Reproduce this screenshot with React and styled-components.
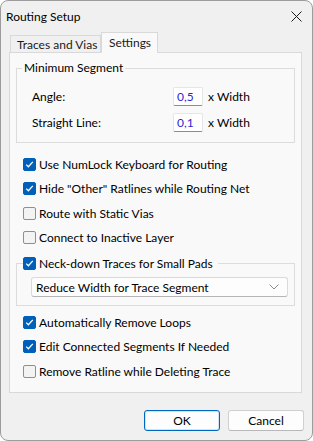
import React from 'react';
import styled, { createGlobalStyle } from 'styled-components';

const GlobalStyle = createGlobalStyle`
  html, body {
    margin: 0;
    padding: 0;
    background: #ffffff;
  }
  body {
    font-family: "Segoe UI", Lato, "Noto Sans", sans-serif;
    font-size: 12px;
    color: #000;
  }
`;

const options = [
  { label: 'Use NumLock Keyboard for Routing', checked: true },
  { label: 'Hide "Other" Ratlines while Routing Net', checked: true },
  { label: 'Route with Static Vias', checked: false },
  { label: 'Connect to Inactive Layer', checked: false },
];

const moreOptions = [
  { label: 'Automatically Remove Loops', checked: true },
  { label: 'Edit Connected Segments If Needed', checked: true },
  { label: 'Remove Ratline while Deleting Trace', checked: false },
];

const CheckBox = ({ checked }) => (
  <Box checked={checked}>
    {checked && (
      <svg width="9" height="9" viewBox="0 0 9 9">
        <path d="M1.2 4.6 L3.4 6.8 L7.8 1.9" fill="none" stroke="#fff" strokeWidth="1.3" />
      </svg>
    )}
  </Box>
);

const CheckRow = ({ label, checked }) => (
  <Row>
    <CheckBox checked={checked} />
    <RowText>{label}</RowText>
  </Row>
);

const App = () => {
  return (
    <>
      <GlobalStyle />
      <Window>
        <TitleBar>
          <Title>Routing Setup</Title>
          <svg width="11" height="11" viewBox="0 0 11 11">
            <path d="M0.5 0.5 L10.5 10.5 M10.5 0.5 L0.5 10.5" stroke="#1a1a1a" strokeWidth="1" />
          </svg>
        </TitleBar>
        <Body>
          <TabStrip>
            <Tab width={91}>Traces and Vias</Tab>
            <Tab width={57} active>Settings</Tab>
          </TabStrip>
          <Panel>
            <Group>
              <Legend>Minimum Segment</Legend>
              <FieldRow>
                <FieldLabel>Angle:</FieldLabel>
                <NumberBox>0,5</NumberBox>
                <Unit>x Width</Unit>
              </FieldRow>
              <FieldRow>
                <FieldLabel>Straight Line:</FieldLabel>
                <NumberBox>0,1</NumberBox>
                <Unit>x Width</Unit>
              </FieldRow>
            </Group>

            <CheckList>
              {options.map((o) => (
                <CheckRow key={o.label} {...o} />
              ))}
            </CheckList>

            <NeckGroup>
              <CheckLegend>
                <CheckBox checked />
                <RowText>Neck-down Traces for Small Pads</RowText>
              </CheckLegend>
              <Select>
                <span>Reduce Width for Trace Segment</span>
                <svg width="10" height="6" viewBox="0 0 10 6">
                  <path d="M0.5 0.5 L5 5 L9.5 0.5" fill="none" stroke="#8a8a8a" strokeWidth="1" />
                </svg>
              </Select>
            </NeckGroup>

            <CheckList after>
              {moreOptions.map((o) => (
                <CheckRow key={o.label} {...o} />
              ))}
            </CheckList>
          </Panel>
          <Buttons>
            <Button primary>OK</Button>
            <Button>Cancel</Button>
          </Buttons>
        </Body>
      </Window>
    </>
  );
};

const Window = styled.div`
  width: 313px;
  height: 441px;
  box-sizing: border-box;
  border: 1px solid #9c9c9c;
  border-radius: 8px;
  background: #f0f0f0;
  overflow: hidden;
  display: flex;
  flex-direction: column;
`;

const TitleBar = styled.div`
  height: 31px;
  display: flex;
  align-items: center;
  justify-content: space-between;
  padding: 0 10px 1px 5px;
  box-sizing: border-box;
`;

const Title = styled.span`
  font-size: 12px;
  color: #000;
`;

const Body = styled.div`
  padding: 0 8px;
  display: flex;
  flex-direction: column;
`;

const TabStrip = styled.div`
  height: 20px;
  display: flex;
  align-items: flex-end;
  padding-left: 1px;
  position: relative;
  z-index: 1;
`;

const Tab = styled.div`
  box-sizing: border-box;
  width: ${(p) => p.width}px;
  height: ${(p) => (p.active ? '21px' : '17px')};
  margin-bottom: ${(p) => (p.active ? '-1px' : '0')};
  padding: ${(p) => (p.active ? '2px 0 0 7px' : '0 0 0 6px')};
  border: 1px solid #d9d9d9;
  border-bottom: none;
  background: ${(p) => (p.active ? '#f9f9f9' : '#f0f0f0')};
  display: flex;
  align-items: ${(p) => (p.active ? 'flex-start' : 'center')};
  color: #1a1a1a;
  white-space: nowrap;
`;

const Panel = styled.div`
  box-sizing: border-box;
  height: 341px;
  margin-right: 2px;
  border: 1px solid #d9d9d9;
  background: #f9f9f9;
  display: flex;
  flex-direction: column;
`;

const Group = styled.div`
  position: relative;
  margin: 15px 6px 0;
  padding: 18px 0 10px 15px;
  border: 1px solid #dcdcdc;
  display: flex;
  flex-direction: column;
  gap: 7px;
`;

const Legend = styled.span`
  position: absolute;
  top: -9px;
  left: 5px;
  padding: 0 2px;
  line-height: 16px;
  background: #f9f9f9;
`;

const FieldRow = styled.div`
  display: flex;
  align-items: center;
  height: 19px;
`;

const FieldLabel = styled.span`
  width: 141px;
`;

const NumberBox = styled.div`
  box-sizing: border-box;
  width: 30px;
  height: 19px;
  padding-left: 3px;
  background: #fff;
  border: 1px solid #e6e6e6;
  border-bottom-color: #8c8c8c;
  border-radius: 2px;
  color: #2f1fd3;
  display: flex;
  align-items: center;
`;

const Unit = styled.span`
  margin-left: 5px;
`;

const CheckList = styled.div`
  margin-top: ${(p) => (p.after ? '4px' : '9px')};
  padding-left: 13px;
  display: flex;
  flex-direction: column;
`;

const Row = styled.div`
  height: 24.5px;
  display: flex;
  align-items: center;
`;

const RowText = styled.span`
  margin-left: 3px;
  white-space: nowrap;
`;

const Box = styled.span`
  box-sizing: border-box;
  width: 13px;
  height: 13px;
  border-radius: 2px;
  border: 1px solid ${(p) => (p.checked ? '#005fb8' : '#8f8f8f')};
  background: ${(p) => (p.checked ? '#005fb8' : '#f3f3f3')};
  display: flex;
  align-items: center;
  justify-content: center;
  flex: none;
`;

const NeckGroup = styled.div`
  position: relative;
  margin: 13px 6px 0;
  padding: 13px 6px 8px 14px;
  border: 1px solid #dcdcdc;
`;

const CheckLegend = styled.div`
  position: absolute;
  top: -10px;
  left: 6px;
  height: 19px;
  padding-right: 5px;
  background: #f9f9f9;
  display: flex;
  align-items: center;
`;

const Select = styled.div`
  box-sizing: border-box;
  height: 20px;
  background: #fdfdfd;
  border: 1px solid #dadada;
  border-bottom-color: #b5b5b5;
  border-radius: 3px;
  padding: 0 8px 0 4px;
  display: flex;
  align-items: center;
  justify-content: space-between;
  color: #000;
`;

const Buttons = styled.div`
  margin-top: 17px;
  display: flex;
  justify-content: flex-end;
  gap: 8px;
`;

const Button = styled.div`
  box-sizing: border-box;
  width: 76px;
  height: 21px;
  border-radius: 3px;
  background: #fdfdfd;
  border: 1px solid ${(p) => (p.primary ? '#0067c0' : '#d0d0d0')};
  border-bottom-color: ${(p) => (p.primary ? '#0067c0' : '#b8b8b8')};
  box-shadow: ${(p) => (p.primary ? 'inset 0 0 0 1px #cfe3f5' : 'none')};
  display: flex;
  align-items: center;
  justify-content: center;
  color: #000;
`;

export default App;
